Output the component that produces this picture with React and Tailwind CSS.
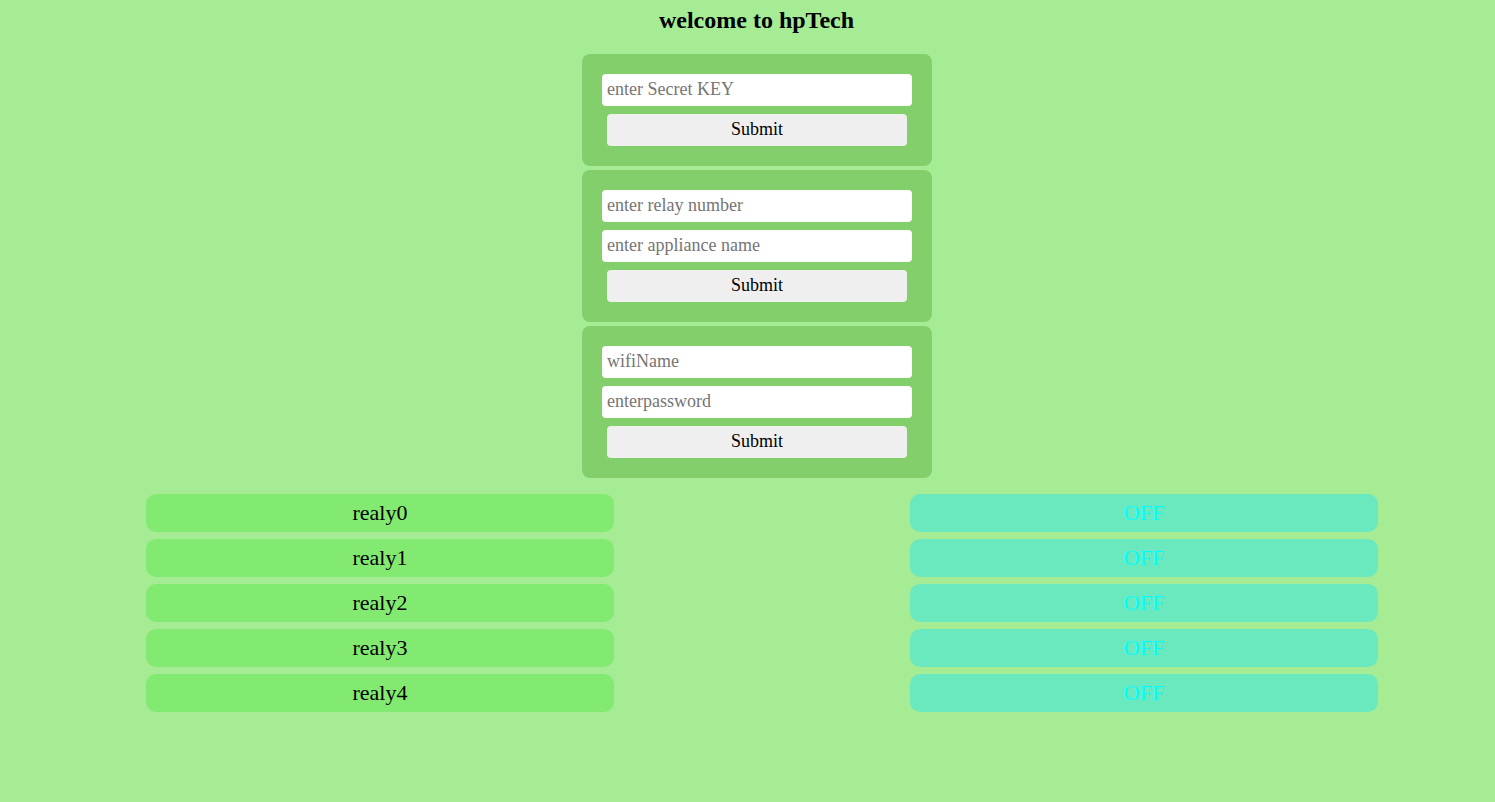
const serif = { fontFamily: '"Liberation Serif", "Times New Roman", serif' };

function Field({ placeholder }) {
  return (
    <input
      placeholder={placeholder}
      className="w-[310px] h-8 rounded bg-white px-[5px] pb-[2px] text-[18px] text-black placeholder:text-[#757575] outline-none"
      style={serif}
    />
  );
}

function SubmitButton() {
  return (
    <button
      className="w-[300px] h-8 rounded bg-[#efefef] pb-[2px] text-[18px] text-black"
      style={serif}
    >
      Submit
    </button>
  );
}

function Card({ fields }) {
  return (
    <div className="w-[350px] rounded-lg bg-[#83cf6b] p-5 flex flex-col items-center gap-2">
      {fields.map((f) => (
        <Field key={f} placeholder={f} />
      ))}
      <SubmitButton />
    </div>
  );
}

const relays = [0, 1, 2, 3, 4];

export default function App() {
  return (
    <div className="min-h-[802px] bg-[#a6ec95] text-black" style={serif}>
      <div className="w-[1495px] flex flex-col">
        <h1 className="ml-[18px] pt-[6px] mb-[20px] text-center text-[24px] leading-[28px] font-bold">
          welcome to hpTech
        </h1>

        <div className="ml-[582px] flex flex-col gap-1">
          <Card fields={["enter Secret KEY"]} />
          <Card fields={["enter relay number", "enter appliance name"]} />
          <Card fields={["wifiName", "enterpassword"]} />
        </div>

        <div className="mt-4 ml-[146px] flex gap-[296px]">
          <div className="flex flex-col gap-[7px]">
            {relays.map((n) => (
              <div
                key={n}
                className="w-[468px] h-[38px] pb-[2px] rounded-[10px] bg-[#82ea70] flex items-center justify-center text-[22px]"
              >
                realy{n}
              </div>
            ))}
          </div>
          <div className="flex flex-col gap-[7px]">
            {relays.map((n) => (
              <div
                key={n}
                className="w-[468px] h-[38px] pb-[2px] rounded-[10px] bg-[#69e9bd] flex items-center justify-center text-[22px] text-[#00ffff]"
              >
                OFF
              </div>
            ))}
          </div>
        </div>
      </div>
    </div>
  );
}
